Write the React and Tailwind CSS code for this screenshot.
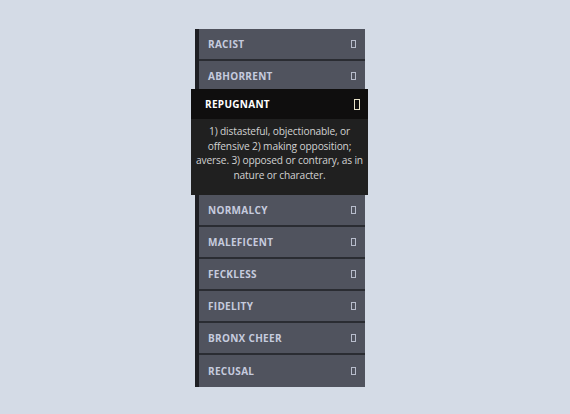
export default function App() {
  const before = ["RACIST", "ABHORRENT"];
  const after = ["NORMALCY", "MALEFICENT", "FECKLESS", "FIDELITY", "BRONX CHEER", "RECUSAL"];
  const Icon = ({ active }) => (
    <span
      className={
        "inline-block border " +
        (active ? "border-[#e8e2c8] h-[11px] w-[6px]" : "border-[#b7bccb] w-[5px] h-[8px]")
      }
    />
  );
  const Row = ({ label, last }) => (
    <div
      className={
        "h-[32px] flex items-center justify-between pl-[9px] pr-[9px] bg-[#50535e] " +
        (last ? "" : "border-b-2 border-[#2a2c32]")
      }
    >
      <span className="text-[10px] font-bold tracking-[0.3px] text-[#c6cbde]">{label}</span>
      <Icon />
    </div>
  );
  return (
    <div
      className="w-[570px] h-[414px] bg-[#d4dbe6] flex justify-center pt-[29px]"
      style={{ fontFamily: '"Open Sans", "DejaVu Sans", sans-serif' }}
    >
      <div className="w-[170px] mr-[10px] flex flex-col border-l-4 border-[#1e1f24] self-start">
        {before.map((l) => (
          <Row key={l} label={l} />
        ))}
        <div className="-ml-[8px] -mr-[3px] -mt-[4px] flex flex-col">
          <div className="h-[30px] bg-[#0f0e0e] flex items-center justify-between pl-[14px] pr-[8px]">
            <span className="text-[10px] font-bold tracking-[0.3px] text-white">REPUGNANT</span>
            <Icon active />
          </div>
          <div className="h-[76px] bg-[#202020] pt-[5px] flex flex-col items-center text-[10.2px] tracking-[-0.15px] leading-[14.5px] text-[#d2d2d2] whitespace-nowrap">
            <span>1) distasteful, objectionable, or</span>
            <span>offensive 2) making opposition;</span>
            <span>averse. 3) opposed or contrary, as in</span>
            <span>nature or character.</span>
          </div>
        </div>
        {after.map((l, i) => (
          <Row key={l} label={l} last={i === after.length - 1} />
        ))}
      </div>
    </div>
  );
}
